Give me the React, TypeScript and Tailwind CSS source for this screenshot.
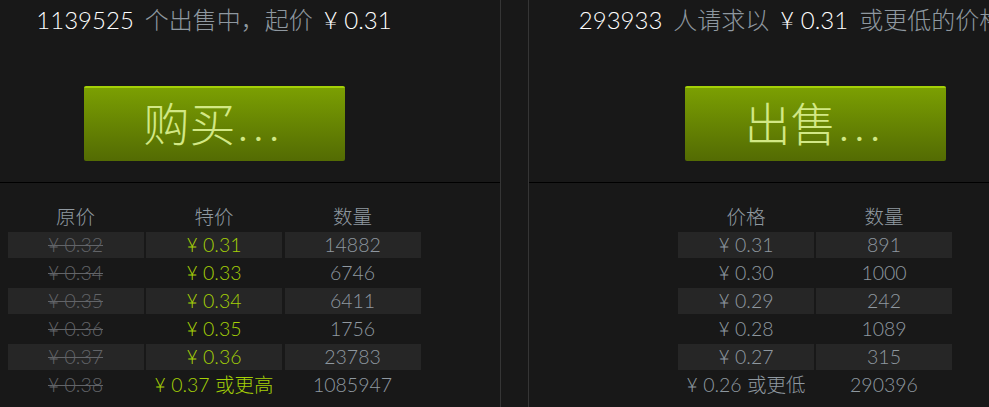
import { ReactNode } from 'react';

const FONT = 'font-[Lato,"Noto_Sans_CJK_SC",sans-serif]';

type SellRow = { orig: string; price: string; qty: string };
type BuyRow = { price: string; qty: string };

const SELL: SellRow[] = [
  { orig: '¥ 0.32', price: '¥ 0.31', qty: '14882' },
  { orig: '¥ 0.34', price: '¥ 0.33', qty: '6746' },
  { orig: '¥ 0.35', price: '¥ 0.34', qty: '6411' },
  { orig: '¥ 0.36', price: '¥ 0.35', qty: '1756' },
  { orig: '¥ 0.37', price: '¥ 0.36', qty: '23783' },
  { orig: '¥ 0.38', price: '¥ 0.37 或更高', qty: '1085947' },
];

const BUY: BuyRow[] = [
  { price: '¥ 0.31', qty: '891' },
  { price: '¥ 0.30', qty: '1000' },
  { price: '¥ 0.29', qty: '242' },
  { price: '¥ 0.28', qty: '1089' },
  { price: '¥ 0.27', qty: '315' },
  { price: '¥ 0.26 或更低', qty: '290396' },
];

const Cell = ({ shaded, className, children }: { shaded: boolean; className?: string; children: ReactNode }) => (
  <div
    className={
      'h-[25.5px] leading-[25.5px] text-center text-[19.5px] font-light whitespace-nowrap ' +
      (shaded ? 'bg-[#262626] ' : '') +
      (className ?? '')
    }
  >
    {children}
  </div>
);

const GreenButton = ({ label }: { label: string }) => (
  <button className="mx-auto flex h-[75px] w-[261px] items-center justify-center rounded-[2px] border-t-2 border-[#a4d007] bg-linear-to-b from-[#7b9f02] to-[#536b03] pb-[2px] text-[46px] font-light leading-none text-[#d2e885]">
    {label.slice(0, 2)}
    <span className="ml-[2px] tracking-[5px]">...</span>
  </button>
);

const Panel = ({ header, button, children, side }: { header: ReactNode; button: string; children: ReactNode; side: 'l' | 'r' }) => (
  <div className={'w-[573px] shrink-0 border-[#353535] ' + (side === 'l' ? 'border-r' : 'border-l')}>
    <div className="flex h-[40px] items-center justify-center gap-[11px] whitespace-nowrap text-[24px] font-light text-[#8f98a0]">{header}</div>
    <div className="pt-[46px] pb-[21px]">
      <GreenButton label={button} />
    </div>
    <div className="border-t border-black pt-[21px]">{children}</div>
  </div>
);

export default function App() {
  return (
    <div className={'h-[407px] w-[989px] overflow-hidden bg-[#181818] ' + FONT}>
      <div className="-ml-[72px] flex h-full">
        <Panel
          side="l"
          button="购买..."
          header={
            <>
              <span className="text-white">1139525</span>
              <span>个出售中，起价</span>
              <span className="text-white">¥ 0.31</span>
            </>
          }
        >
          <div className="mx-auto grid w-fit grid-cols-[136px_136px_136px] gap-x-[2.5px] gap-y-[2.5px]">
            <Cell shaded={false} className="text-[#8f98a0]">原价</Cell>
            <Cell shaded={false} className="text-[#8f98a0]">特价</Cell>
            <Cell shaded={false} className="text-[#8f98a0]">数量</Cell>
            {SELL.map((r, i) => (
              <div key={r.qty} className="contents">
                <Cell shaded={i % 2 === 0 && i < 5} className="text-[#626468] line-through">{r.orig}</Cell>
                <Cell shaded={i % 2 === 0 && i < 5} className="text-[#a4d007]">{r.price}</Cell>
                <Cell shaded={i % 2 === 0 && i < 5} className="text-[#8f98a0]">{r.qty}</Cell>
              </div>
            ))}
          </div>
        </Panel>

        <div className="w-[27px] shrink-0" />

        <Panel
          side="r"
          button="出售..."
          header={
            <>
              <span className="text-white">293933</span>
              <span>人请求以</span>
              <span className="text-white">¥ 0.31</span>
              <span>或更低的价格购买</span>
            </>
          }
        >
          <div className="mx-auto grid w-fit grid-cols-[136px_136px] gap-x-[2px] gap-y-[2.5px]">
            <Cell shaded={false} className="text-[#8f98a0]">价格</Cell>
            <Cell shaded={false} className="text-[#8f98a0]">数量</Cell>
            {BUY.map((r, i) => (
              <div key={r.qty} className="contents">
                <Cell shaded={i % 2 === 0 && i < 5} className="text-[#8f98a0]">{r.price}</Cell>
                <Cell shaded={i % 2 === 0 && i < 5} className="text-[#8f98a0]">{r.qty}</Cell>
              </div>
            ))}
          </div>
        </Panel>
      </div>
    </div>
  );
}
